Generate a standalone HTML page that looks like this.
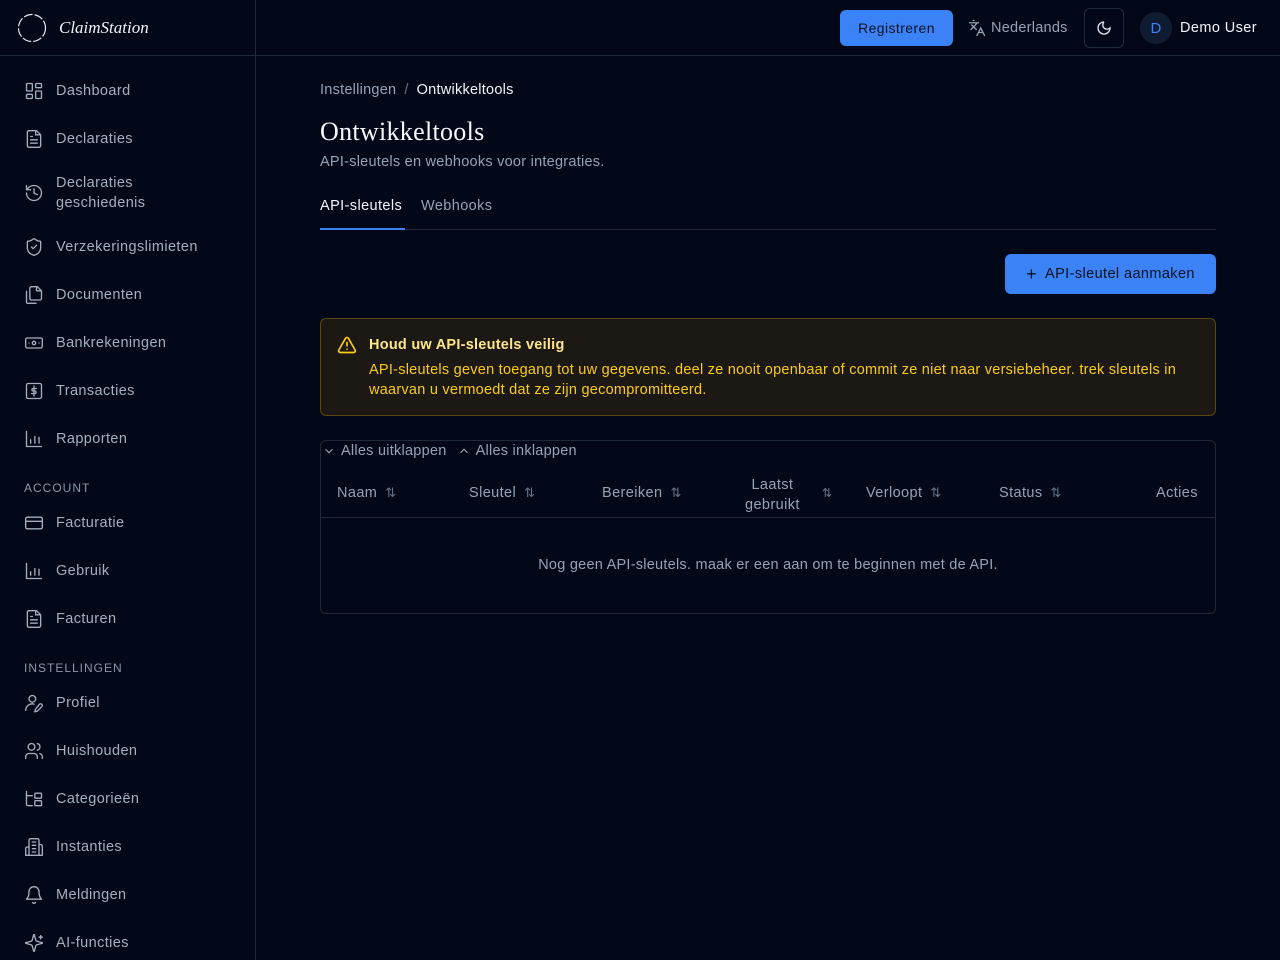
<!DOCTYPE html>
<html><head><meta charset="utf-8"><style>
*{box-sizing:border-box;margin:0;padding:0}
body{width:1280px;height:960px;background:#020817;font-family:"Liberation Sans",sans-serif;color:#e2e8f0;position:relative;overflow:hidden;font-size:14px;letter-spacing:.25px}
.side{position:absolute;left:0;top:0;width:256px;height:960px;border-right:1px solid #1e293b;background:#020817}
.logo{height:56px;border-bottom:1px solid #1e293b;display:flex;align-items:center;padding-left:17px}
.logo span{font-family:"Liberation Serif",serif;font-style:italic;font-size:17px;color:#f1f5f9;margin-left:12px;letter-spacing:0}
.nav{position:absolute;left:24px;display:flex;align-items:center;color:#a3afc2;font-size:14.5px;letter-spacing:.4px}
.nav svg{width:20px;height:20px;margin-right:12px;stroke:#a3afc2;fill:none;stroke-width:1.6;stroke-linecap:round;stroke-linejoin:round}
.sec{position:absolute;left:24px;font-size:12px;letter-spacing:1px;color:#8a96ab}
.top{position:absolute;left:256px;right:0;top:0;height:56px;border-bottom:1px solid #1e293b}
.btn{position:absolute;background:#3b82f6;color:#0b1220;border-radius:6px;font-size:14px;display:flex;align-items:center;justify-content:center;letter-spacing:.4px}
.muted{color:#94a3b8}
.h{position:absolute;top:485px;font-size:14.5px;color:#94a3b8;letter-spacing:.4px}
.s{font-size:13px;color:#64748b;margin-left:8px}
</style></head><body>
<div class="side">
 <div class="logo"><svg width="30" height="30" viewBox="0 0 30 30"><circle cx="15" cy="15" r="13.5" fill="none" stroke="#e2e8f0" stroke-width="1.2" stroke-dasharray="9 2"/></svg><span>ClaimStation</span></div>
</div>
<div class="nav" style="top:81px"><svg viewBox="0 0 24 24"><rect x="3" y="3" width="7" height="9" rx="1"/><rect x="14" y="3" width="7" height="5" rx="1"/><rect x="14" y="12" width="7" height="9" rx="1"/><rect x="3" y="16" width="7" height="5" rx="1"/></svg>Dashboard</div>
<div class="nav" style="top:129px"><svg viewBox="0 0 24 24"><path d="M15 2H6a2 2 0 0 0-2 2v16a2 2 0 0 0 2 2h12a2 2 0 0 0 2-2V7z"/><path d="M14 2v5h5M16 13H8M16 17H8M10 9H8"/></svg>Declaraties</div>
<div class="nav" style="top:173px"><svg viewBox="0 0 24 24"><path d="M3 12a9 9 0 1 0 9-9 9.75 9.75 0 0 0-6.74 2.74L3 8"/><path d="M3 3v5h5M12 7v5l4 2"/></svg><div style="line-height:20px">Declaraties<br>geschiedenis</div></div>
<div class="nav" style="top:237px"><svg viewBox="0 0 24 24"><path d="M20 13c0 5-3.5 7.5-7.66 8.95a1 1 0 0 1-.67 0C7.5 20.5 4 18 4 13V6a1 1 0 0 1 1-1c2 0 4.5-1.2 6.24-2.72a1.170 1.17 0 0 1 1.52 0C14.51 3.81 17 5 19 5a1 1 0 0 1 1 1z"/><path d="m9 12 2 2 4-4"/></svg>Verzekeringslimieten</div>
<div class="nav" style="top:285px"><svg viewBox="0 0 24 24"><path d="M16 2H9a2 2 0 0 0-2 2v12a2 2 0 0 0 2 2h10a2 2 0 0 0 2-2V7z"/><path d="M15 2v5h5M3 7.6v12.8A1.6 1.6 0 0 0 4.6 22h9.8"/></svg>Documenten</div>
<div class="nav" style="top:333px"><svg viewBox="0 0 24 24"><rect x="2" y="6" width="20" height="12" rx="2"/><circle cx="12" cy="12" r="2"/><path d="M6 12h.01M18 12h.01"/></svg>Bankrekeningen</div>
<div class="nav" style="top:381px"><svg viewBox="0 0 24 24"><rect x="3" y="3" width="18" height="18" rx="2"/><path d="M12 6v12M15 9h-4a1.5 1.5 0 0 0 0 3h2a1.5 1.5 0 0 1 0 3H9"/></svg>Transacties</div>
<div class="nav" style="top:429px"><svg viewBox="0 0 24 24"><path d="M3 3v18h18M8 17v-4M13 17V9M18 17v-7"/></svg>Rapporten</div>
<div class="sec" style="top:481px">ACCOUNT</div>
<div class="nav" style="top:513px"><svg viewBox="0 0 24 24"><rect x="2" y="5" width="20" height="14" rx="2"/><path d="M2 10h20"/></svg>Facturatie</div>
<div class="nav" style="top:561px"><svg viewBox="0 0 24 24"><path d="M3 3v18h18M8 17v-4M13 17V9M18 17v-7"/></svg>Gebruik</div>
<div class="nav" style="top:609px"><svg viewBox="0 0 24 24"><path d="M15 2H6a2 2 0 0 0-2 2v16a2 2 0 0 0 2 2h12a2 2 0 0 0 2-2V7z"/><path d="M14 2v5h5M16 13H8M16 17H8M10 9H8"/></svg>Facturen</div>
<div class="sec" style="top:661px">INSTELLINGEN</div>
<div class="nav" style="top:693px"><svg viewBox="0 0 24 24"><circle cx="10" cy="7" r="4"/><path d="M2 21a8 8 0 0 1 10-7.7M18.4 13.6a2 2 0 0 1 2.9 2.9L16 21.8l-3 .8.8-3z"/></svg>Profiel</div>
<div class="nav" style="top:741px"><svg viewBox="0 0 24 24"><circle cx="9" cy="7" r="4"/><path d="M16 21v-2a4 4 0 0 0-4-4H6a4 4 0 0 0-4 4v2M16 3.1a4 4 0 0 1 0 7.8M22 21v-2a4 4 0 0 0-3-3.9"/></svg>Huishouden</div>
<div class="nav" style="top:789px"><svg viewBox="0 0 24 24"><path d="M3 3v15a2 2 0 0 0 2 2h5M3 8h7"/><rect x="13" y="5" width="8" height="6" rx="1"/><rect x="13" y="14" width="8" height="6" rx="1"/></svg>Categorieën</div>
<div class="nav" style="top:837px"><svg viewBox="0 0 24 24"><path d="M6 22V4a2 2 0 0 1 2-2h8a2 2 0 0 1 2 2v18zM6 12H4a2 2 0 0 0-2 2v8h4M18 9h2a2 2 0 0 1 2 2v11h-4M10 6h4M10 10h4M10 14h4M10 18h4"/></svg>Instanties</div>
<div class="nav" style="top:885px"><svg viewBox="0 0 24 24"><path d="M6 8a6 6 0 0 1 12 0c0 7 3 9 3 9H3s3-2 3-9M10.3 21a1.94 1.94 0 0 0 3.4 0"/></svg>Meldingen</div>
<div class="nav" style="top:933px"><svg viewBox="0 0 24 24"><path d="M9.9 15.5A2 2 0 0 0 8.5 14.1l-6.1-1.6a.5.5 0 0 1 0-1l6.1-1.6A2 2 0 0 0 9.9 8.5l1.6-6.1a.5.5 0 0 1 1 0l1.6 6.1a2 2 0 0 0 1.4 1.4l6.1 1.6a.5.5 0 0 1 0 1l-6.1 1.6a2 2 0 0 0-1.4 1.4l-1.6 6.1a.5.5 0 0 1-1 0zM20 3v4M22 5h-4"/></svg>AI-functies</div>

<div class="top"></div>
<div class="btn" style="left:840px;top:10px;width:113px;height:36px">Registreren</div>
<div style="position:absolute;left:968px;top:19px;display:flex;align-items:center;color:#94a3b8;font-size:14.5px"><svg width="18" height="18" viewBox="0 0 24 24" fill="none" stroke="#94a3b8" stroke-width="1.8" stroke-linecap="round"><path d="m5 8 6 6M4 14l6-6 2-3M2 5h12M7 2h1M22 22l-5-10-5 10M14 18h6"/></svg><span style="margin-left:5px">Nederlands</span></div>
<div style="position:absolute;left:1084px;top:8px;width:40px;height:40px;border:1px solid #1e293b;border-radius:6px;display:flex;align-items:center;justify-content:center"><svg width="16" height="16" viewBox="0 0 24 24" fill="none" stroke="#e2e8f0" stroke-width="2"><path d="M12 3a6 6 0 0 0 9 9 9 9 0 1 1-9-9"/></svg></div>
<div style="position:absolute;left:1140px;top:12px;width:32px;height:32px;border-radius:50%;background:#0f1b30;color:#3b82f6;display:flex;align-items:center;justify-content:center;font-size:15px">D</div>
<div style="position:absolute;left:1180px;top:20px;font-size:14.5px;color:#f1f5f9;letter-spacing:.4px">Demo User</div>

<div style="position:absolute;left:320px;top:82px;font-size:14.5px"><span class="muted">Instellingen</span><span style="color:#64748b;margin:0 8px">/</span><span style="color:#f1f5f9">Ontwikkeltools</span></div>
<div style="position:absolute;left:320px;top:117px;font-family:'Liberation Serif',serif;font-size:26px;color:#f8fafc;letter-spacing:.3px">Ontwikkeltools</div>
<div style="position:absolute;left:320px;top:154px;font-size:14.5px" class="muted">API-sleutels en webhooks voor integraties.</div>
<div style="position:absolute;left:320px;top:229px;width:896px;height:1px;background:#1e293b"></div>
<div style="position:absolute;left:320px;top:198px;font-size:14.5px;color:#f1f5f9;letter-spacing:.4px">API-sleutels</div>
<div style="position:absolute;left:320px;top:228px;width:85px;height:2px;background:#3b82f6"></div>
<div style="position:absolute;left:421px;top:198px;font-size:14.5px;letter-spacing:.4px" class="muted">Webhooks</div>
<div class="btn" style="left:1005px;top:254px;width:211px;height:40px;font-size:14.5px"><span style="font-size:18px;margin-right:8px">+</span>API-sleutel aanmaken</div>

<div style="position:absolute;left:320px;top:318px;width:896px;height:98px;border:1px solid #5c4610;border-radius:6px;background:#1c1814"></div>
<svg style="position:absolute;left:337px;top:335px" width="20" height="20" viewBox="0 0 24 24" fill="none" stroke="#facc15" stroke-width="2" stroke-linecap="round"><path d="m21.7 18-8-14a2 2 0 0 0-3.5 0l-8 14A2 2 0 0 0 4 21h16a2 2 0 0 0 1.7-3M12 9v4M12 17h.01"/></svg>
<div style="position:absolute;left:369px;top:337px;color:#fde68a;font-size:14.5px;font-weight:bold">Houd uw API-sleutels veilig</div>
<div style="position:absolute;left:369px;top:360px;width:840px;color:#facc15;font-size:14.5px;line-height:20px">API-sleutels geven toegang tot uw gegevens. deel ze nooit openbaar of commit ze niet naar versiebeheer. trek sleutels in waarvan u vermoedt dat ze zijn gecompromitteerd.</div>

<div style="position:absolute;left:320px;top:440px;width:896px;height:174px;border:1px solid #1e293b;border-radius:6px"></div>
<div style="position:absolute;left:322px;top:443px;font-size:14.5px;display:flex;align-items:center" class="muted"><svg width="14" height="14" viewBox="0 0 24 24" fill="none" stroke="#94a3b8" stroke-width="2"><path d="m6 9 6 6 6-6"/></svg><span style="margin:0 10px 0 5px">Alles uitklappen</span><svg width="14" height="14" viewBox="0 0 24 24" fill="none" stroke="#94a3b8" stroke-width="2"><path d="m18 15-6-6-6 6"/></svg><span style="margin-left:5px">Alles inklappen</span></div>
<div style="position:absolute;left:321px;top:517px;width:894px;height:1px;background:#1e293b"></div>
<div class="h" style="left:337px">Naam<span class="s">⇅</span></div>
<div class="h" style="left:469px">Sleutel<span class="s">⇅</span></div>
<div class="h" style="left:602px">Bereiken<span class="s">⇅</span></div>
<div class="h" style="top:475px;left:745px;text-align:center;line-height:20px">Laatst<br>gebruikt</div>
<div style="position:absolute;top:486px;left:822px;font-size:12px;color:#64748b">⇅</div>
<div class="h" style="left:866px">Verloopt<span class="s">⇅</span></div>
<div class="h" style="left:999px">Status<span class="s">⇅</span></div>
<div class="h" style="left:1156px">Acties</div>
<div style="position:absolute;top:557px;left:320px;width:896px;text-align:center;font-size:14.5px" class="muted">Nog geen API-sleutels. maak er een aan om te beginnen met de API.</div>
</body></html>
